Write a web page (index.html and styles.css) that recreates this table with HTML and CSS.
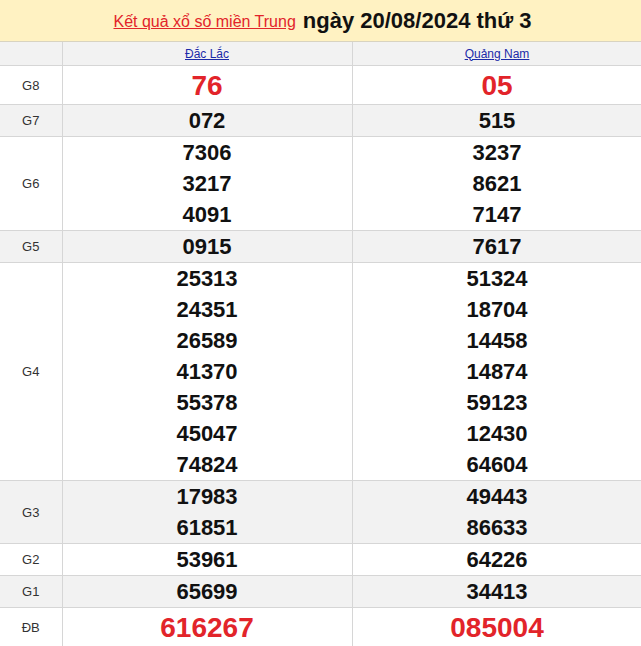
FILE: index.html
```html
<!DOCTYPE html>
<html lang="vi">
<head>
<meta charset="utf-8">
<title>Kết quả xổ số miền Trung</title>
<link rel="stylesheet" href="styles.css">
</head>
<body>
<div class="title">
  <a class="title-link" href="#">Kết quả xổ số miền Trung</a>
  <span class="title-date">ngày 20/08/2024 thứ 3</span>
</div>
<table class="results">
  <colgroup><col class="c-label"><col class="c-prov"><col class="c-prov"></colgroup>
  <thead>
    <tr class="head"><th></th><th><a href="#">Đắc Lắc</a></th><th><a href="#">Quảng Nam</a></th></tr>
  </thead>
  <tbody>
    <tr class="big"><td class="lbl">G8</td><td class="red">76</td><td class="red">05</td></tr>
    <tr class="alt"><td class="lbl">G7</td><td>072</td><td>515</td></tr>
    <tr><td class="lbl">G6</td><td><div>7306</div><div>3217</div><div>4091</div></td><td><div>3237</div><div>8621</div><div>7147</div></td></tr>
    <tr class="alt"><td class="lbl">G5</td><td>0915</td><td>7617</td></tr>
    <tr><td class="lbl">G4</td>
      <td><div>25313</div><div>24351</div><div>26589</div><div>41370</div><div>55378</div><div>45047</div><div>74824</div></td>
      <td><div>51324</div><div>18704</div><div>14458</div><div>14874</div><div>59123</div><div>12430</div><div>64604</div></td></tr>
    <tr class="alt"><td class="lbl">G3</td><td><div>17983</div><div>61851</div></td><td><div>49443</div><div>86633</div></td></tr>
    <tr><td class="lbl">G2</td><td>53961</td><td>64226</td></tr>
    <tr class="alt"><td class="lbl">G1</td><td>65699</td><td>34413</td></tr>
    <tr class="big"><td class="lbl">ĐB</td><td class="red">616267</td><td class="red">085004</td></tr>
  </tbody>
</table>
</body>
</html>
```
FILE: styles.css
```css
html, body {
  margin: 0;
  padding: 0;
  background: #fff;
  font-family: "Liberation Sans", Arial, sans-serif;
}
.title {
  height: 42px;
  background: #fff2c2;
  display: flex;
  align-items: center;
  justify-content: center;
  gap: 7px;
  padding-left: 4px;
  box-sizing: border-box;
  border-bottom: 1px solid #d8d3c0;
}
.title-link {
  color: #e2242a;
  font-size: 16px;
  text-decoration: underline;
  margin-top: 2px;
}
.title-date {
  color: #111;
  font-size: 22px;
  font-weight: bold;
}
.results {
  border-collapse: collapse;
  width: 642px;
  table-layout: fixed;
}
.c-label { width: 62px; }
.c-prov { width: 290px; }
.results th, .results td {
  border: 1px solid #d6d6d6;
  text-align: center;
  padding: 0;
  vertical-align: middle;
}
.results tr:first-child th { border-top: none; }
.results th:first-child, .results td:first-child { border-left: none; }
.head th {
  height: 23px;
  background: #f2f2f2;
  font-weight: normal;
  font-size: 12px;
}
.head a {
  color: #1b2aa8;
  text-decoration: underline;
}
.results td {
  font-size: 22px;
  font-weight: bold;
  color: #111;
  line-height: 31px;
}
.results td.lbl {
  font-size: 13px;
  font-weight: normal;
  color: #333;
}
.alt td { background: #f2f2f2; }
.big td { height: 38px; }
.results td.red {
  color: #e2242a;
  font-size: 28px;
}
```
